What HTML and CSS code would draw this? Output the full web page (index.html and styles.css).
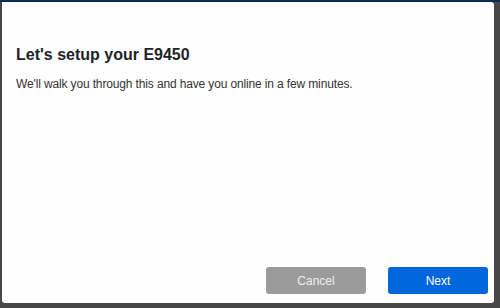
FILE: index.html
```html
<!doctype html>
<html>
<head>
	<meta charset="utf-8">
	<title>Setup</title>
	<link rel="stylesheet" href="styles.css">
</head>
<body>
	<main class="dialog">
		<section class="dialog-body">
			<h1>Let's setup your E9450</h1>
			<p>We'll walk you through this and have you online in a few minutes.</p>
		</section>
		<footer class="dialog-actions">
			<button class="btn btn-cancel">Cancel</button>
			<button class="btn btn-next">Next</button>
		</footer>
	</main>
</body>
</html>
```

FILE: styles.css
```css
html, body {
	margin: 0;
	height: 100%;
}

body {
	background: #474747;
	border-top: 2px solid #0b2a55;
	box-sizing: border-box;
	padding: 0 6px 5px 2px;
	font-family: "Liberation Sans", Arial, sans-serif;
}

.dialog {
	height: 100%;
	background: #fefefe;
	border-radius: 0 3px 3px 3px;
	display: flex;
	flex-direction: column;
}

.dialog-body {
	flex: 1;
	padding: 44px 14px 0;
}

.dialog-body h1 {
	margin: 0;
	font-size: 16px;
	font-weight: bold;
	color: #1f2328;
}

.dialog-body p {
	margin: 13px 0 0;
	font-size: 12px;
	letter-spacing: -0.14px;
	color: #333;
}

.dialog-actions {
	display: flex;
	justify-content: flex-end;
	gap: 22px;
	padding: 0 6px 9px;
}

.btn {
	width: 100px;
	height: 27px;
	border: none;
	border-radius: 3px;
	font-family: inherit;
	font-size: 12px;
	color: #fff;
}

.btn-cancel {
	background: #9b9b9b;
	color: #eee;
}

.btn-next {
	background: #0066dc;
}
```
